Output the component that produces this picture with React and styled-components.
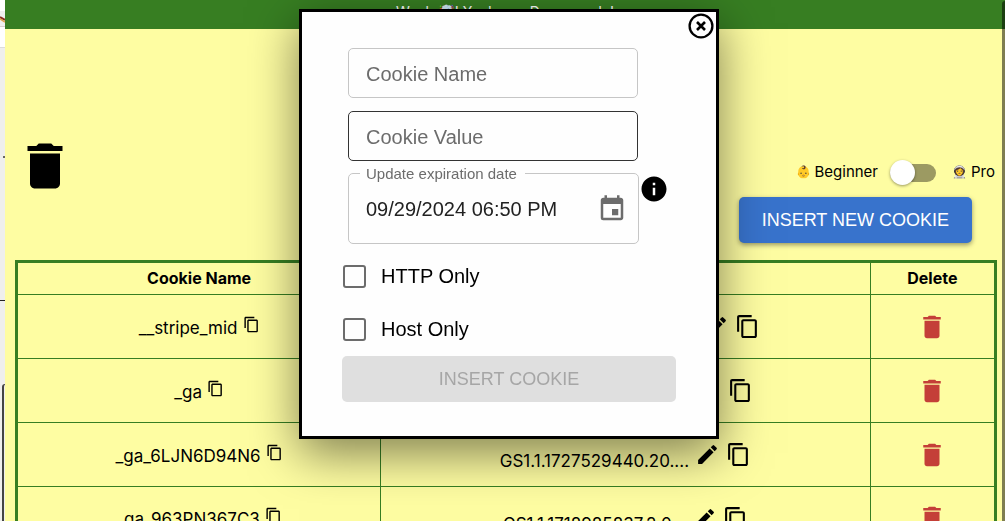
import React, { useState } from 'react';
import styled, { createGlobalStyle } from 'styled-components';
import {
  MdDelete,
  MdContentCopy,
  MdEdit,
  MdInfo,
  MdInsertInvitation,
} from 'react-icons/md';

const GlobalStyle = createGlobalStyle`
  * {
    box-sizing: border-box;
  }

  body {
    margin: 0;
    background: #efefed;
    color: #000;
    font-family: Inter, "Noto Sans", sans-serif;
    font-size: 16px;
    overflow: hidden;
  }

  svg {
    display: block;
  }
`;

const Page = styled.div`
  display: flex;
  height: 100vh;
  overflow: hidden;
`;

const Backdrop = styled.div`
  width: 5px;
  flex: none;
  display: flex;
  flex-direction: column;
`;

const BackdropTop = styled.div`
  height: 48px;
  padding-top: 11px;
  background: #fff;
  border-bottom: 1px solid #dcdcdc;
`;

const BackdropTab = styled.div`
  height: 16px;
  padding-top: 4px;
  background: #efefef;
  border-bottom: 1px solid #d8cfcf;
`;

const BackdropBody = styled.div`
  height: 253px;
  padding: 108px 0 0 3px;
  border-bottom: 1px solid #222;
`;

const BackdropMark = styled.div`
  height: 2px;
  background: #666;
`;

const BackdropPanel = styled.div`
  flex: 1;
  margin: 83px 0 0 2px;
  border-left: 2px solid #444;
  border-top: 1px solid #444;
  border-radius: 3px 0 0 0;
`;

const Popup = styled.div`
  flex: 1;
  min-width: 0;
  background: #fefda2;
`;

const ScrollThumb = styled.div`
  position: fixed;
  top: 1px;
  right: 0;
  bottom: 0;
  width: 3px;
  background: rgba(0, 0, 0, 0.5);
  border-radius: 3px 0 0 0;
`;

const Banner = styled.header`
  height: 29px;
  padding-top: 2px;
  background: #377e22;
  color: #fff;
  font-size: 14px;
  line-height: 20px;
  text-align: center;
`;

const Toolbar = styled.div`
  display: flex;
  justify-content: space-between;
  height: 231px;
  padding: 107px 10px 17px 10px;
`;

const IconButton = styled.button`
  display: inline-flex;
  flex: none;
  align-self: ${(props) => props.$align || 'auto'};
  padding: 0;
  border: 0;
  background: none;
  color: ${(props) => props.$color || '#000'};
  cursor: pointer;
`;

const Actions = styled.div`
  display: flex;
  flex-direction: column;
  justify-content: flex-end;
  align-items: flex-end;
`;

const Mode = styled.label`
  display: flex;
  align-items: center;
  gap: 12px;
  height: 34px;
  margin-bottom: 7px;
  font-size: 15px;
`;

const ModeName = styled.span`
  display: flex;
  align-items: center;
  gap: 4px;
  padding-bottom: 4px;
`;

const Emoji = styled.span`
  font-size: 12px;
`;

const Switch = styled.input`
  appearance: none;
  position: relative;
  width: 46px;
  height: 18px;
  margin: 0 4px 0 0;
  border-radius: 9px;
  background: #9c9a62;

  &::before {
    content: '';
    position: absolute;
    top: -4px;
    left: ${(props) => (props.checked ? '20px' : '0')};
    width: 25px;
    height: 25px;
    border-radius: 50%;
    background: #fff;
    box-shadow: 0 1px 3px rgba(0, 0, 0, 0.4);
  }
`;

const InsertNewButton = styled.button`
  height: 46px;
  margin-right: 23px;
  padding: 0 23px;
  border: 0;
  border-radius: 5px;
  background: #3873cc;
  color: #fff;
  font-family: "Liberation Sans", Arial, sans-serif;
  font-size: 18px;
  box-shadow: 0 2px 5px rgba(0, 0, 0, 0.4);
`;

const CookieTable = styled.table`
  width: calc(100% - 18px);
  margin: 0 8px 0 10px;
  border-collapse: collapse;
  border: 3px solid #377e22;
  table-layout: fixed;
  text-align: center;
`;

const HeadCell = styled.th`
  height: 33px;
  padding: 0 0 2px;
  width: ${(props) => props.$width};
  border: 1px solid #377e22;
  font-weight: 700;
`;

const Cell = styled.td`
  height: 64px;
  padding: 0;
  border: 1px solid #377e22;
  font-size: 17px;
`;

const CellContent = styled.div`
  display: flex;
  align-items: center;
  justify-content: center;
  gap: ${(props) => props.$gap || '5px'};
`;

const NameText = styled.span`
  padding-top: 2px;
`;

const ValueText = styled.span`
  padding-top: 12px;
`;

const Modal = styled.form`
  position: fixed;
  top: 9px;
  left: 299px;
  width: 420px;
  padding: 36px 40px 34px;
  border: 3px solid #000;
  background: #fefefe;
  box-shadow: 0 14px 46px rgba(0, 0, 0, 0.5);
  font-family: "Liberation Sans", Arial, sans-serif;
  font-size: 20px;
`;

const CloseButton = styled(IconButton)`
  position: absolute;
  top: 0;
  right: 1px;
`;

const TextField = styled.input`
  display: block;
  width: 290px;
  height: 50px;
  margin: 0 0 13px 6px;
  padding: 2px 17px 0;
  border: 1px solid ${(props) => (props.$active ? '#333' : '#c6c6c6')};
  border-radius: 5px;
  background: transparent;
  font: inherit;

  &::placeholder {
    color: #6c6c6c;
    opacity: 1;
  }
`;

const DateRow = styled.div`
  display: flex;
  align-items: flex-start;
  margin: -9px 0 0 6px;
`;

const DateField = styled.fieldset`
  display: flex;
  align-items: center;
  width: 291px;
  min-width: 0;
  height: 79px;
  margin: 0;
  padding: 0 11px 7px 17px;
  border: 1px solid #c6c6c6;
  border-radius: 5px;
`;

const DateLegend = styled.legend`
  margin-left: -6px;
  padding: 0 8px 0 6px;
  color: #6c6c6c;
  font-size: 15px;
  line-height: 17px;
`;

const DateInput = styled.input`
  flex: 1;
  min-width: 0;
  padding: 0;
  border: 0;
  background: transparent;
  color: #222;
  font: inherit;
`;

const InfoButton = styled(IconButton)`
  margin-top: 9px;
`;

const CheckRow = styled.label`
  display: flex;
  align-items: center;
  gap: 15px;
  height: 53px;
  padding: 0 1px;
`;

const Checkbox = styled.input`
  appearance: none;
  width: 23px;
  height: 23px;
  margin: 0;
  border: 2px solid #6c6c6c;
  border-radius: 3px;

  &:checked {
    background: #3873cc;
  }
`;

const Checks = styled.div`
  margin-top: 6px;
`;

const SubmitButton = styled.button`
  display: block;
  width: 100%;
  height: 46px;
  border: 0;
  border-radius: 5px;
  background: #dfdfdf;
  color: #a6a6a6;
  font-family: inherit;
  font-size: 18px;
`;

const cookies = [
  { name: '__stripe_mid', value: 'a2d9e7c4-6b0e-4f0a-9...' },
  { name: '_ga', value: 'GA1.1.1420765180.1727...' },
  { name: '_ga_6LJN6D94N6', value: 'GS1.1.1727529440.20....' },
  { name: '_ga_963PN367C3', value: 'GS1.1.1718985837.2.0...' },
];

const CloseIcon = () => (
  <svg width="28" height="28" viewBox="0 0 28 28" fill="none" stroke="currentColor" strokeWidth="2.6">
    <circle cx="14" cy="14" r="11.4" strokeWidth="2.3" />
    <path d="M10 10l8 8M18 10l-8 8" />
  </svg>
);

const CookieRow = ({ cookie }) => (
  <tr>
    <Cell>
      <CellContent>
        <NameText>{cookie.name}</NameText>
        <IconButton $align="flex-start" aria-label="Copy name">
          <MdContentCopy size={17} />
        </IconButton>
      </CellContent>
    </Cell>
    <Cell>
      <CellContent $gap="6px">
        <ValueText>{cookie.value}</ValueText>
        <IconButton aria-label="Edit value">
          <MdEdit size={25} />
        </IconButton>
        <IconButton aria-label="Copy value">
          <MdContentCopy size={25} />
        </IconButton>
      </CellContent>
    </Cell>
    <Cell>
      <CellContent>
        <IconButton $color="#c43f38" aria-label="Delete cookie">
          <MdDelete size={30} />
        </IconButton>
      </CellContent>
    </Cell>
  </tr>
);

const InsertCookieModal = () => {
  const [name, setName] = useState('');
  const [value, setValue] = useState('');
  const [date, setDate] = useState('09/29/2024 06:50 PM');

  return (
    <Modal onSubmit={(e) => e.preventDefault()}>
      <CloseButton type="button" aria-label="Close">
        <CloseIcon />
      </CloseButton>
      <TextField
        aria-label="Cookie Name"
        placeholder="Cookie Name"
        value={name}
        onChange={(e) => setName(e.target.value)}
      />
      <TextField
        $active
        aria-label="Cookie Value"
        placeholder="Cookie Value"
        value={value}
        onChange={(e) => setValue(e.target.value)}
      />
      <DateRow>
        <DateField>
          <DateLegend>Update expiration date</DateLegend>
          <DateInput
            aria-label="Update expiration date"
            value={date}
            onChange={(e) => setDate(e.target.value)}
          />
          <IconButton type="button" $color="#6c6c6c" aria-label="Choose date">
            <MdInsertInvitation size={30} />
          </IconButton>
        </DateField>
        <InfoButton type="button" aria-label="About expiration">
          <MdInfo size={30} />
        </InfoButton>
      </DateRow>
      <Checks>
        <CheckRow>
          <Checkbox type="checkbox" />
          HTTP Only
        </CheckRow>
        <CheckRow>
          <Checkbox type="checkbox" />
          Host Only
        </CheckRow>
      </Checks>
      <SubmitButton disabled={!name || !value}>INSERT COOKIE</SubmitButton>
    </Modal>
  );
};

const App = () => {
  const [pro, setPro] = useState(false);

  return (
    <Page>
      <GlobalStyle />
      <Backdrop>
        <BackdropTop>
          <BackdropTab>
            <svg width="5" height="8" viewBox="0 0 5 8" fill="none">
              <path d="M0 2l5 3" stroke="#8a2f22" strokeWidth="2" />
              <path d="M0 4l5 3" stroke="#e0a04a" strokeWidth="1.5" />
            </svg>
          </BackdropTab>
        </BackdropTop>
        <BackdropBody>
          <BackdropMark />
        </BackdropBody>
        <BackdropPanel />
      </Backdrop>
      <Popup>
        <Banner>Woah 🤯! You're on Demo mode!</Banner>
        <Toolbar>
          <IconButton $align="flex-start" aria-label="Delete all cookies">
            <MdDelete size={60} />
          </IconButton>
          <Actions>
            <Mode>
              <ModeName>
                <Emoji>👶</Emoji>
                Beginner
              </ModeName>
              <Switch type="checkbox" checked={pro} onChange={() => setPro(!pro)} />
              <ModeName>
                <Emoji>👩‍🚀</Emoji>
                Pro
              </ModeName>
            </Mode>
            <InsertNewButton>INSERT NEW COOKIE</InsertNewButton>
          </Actions>
        </Toolbar>
        <CookieTable>
          <thead>
            <tr>
              <HeadCell $width="37.2%">Cookie Name</HeadCell>
              <HeadCell $width="50%">Value</HeadCell>
              <HeadCell $width="12.8%">Delete</HeadCell>
            </tr>
          </thead>
          <tbody>
            {cookies.map((cookie) => (
              <CookieRow key={cookie.name} cookie={cookie} />
            ))}
          </tbody>
        </CookieTable>
      </Popup>
      <ScrollThumb />
      <InsertCookieModal />
    </Page>
  );
};

export default App;
